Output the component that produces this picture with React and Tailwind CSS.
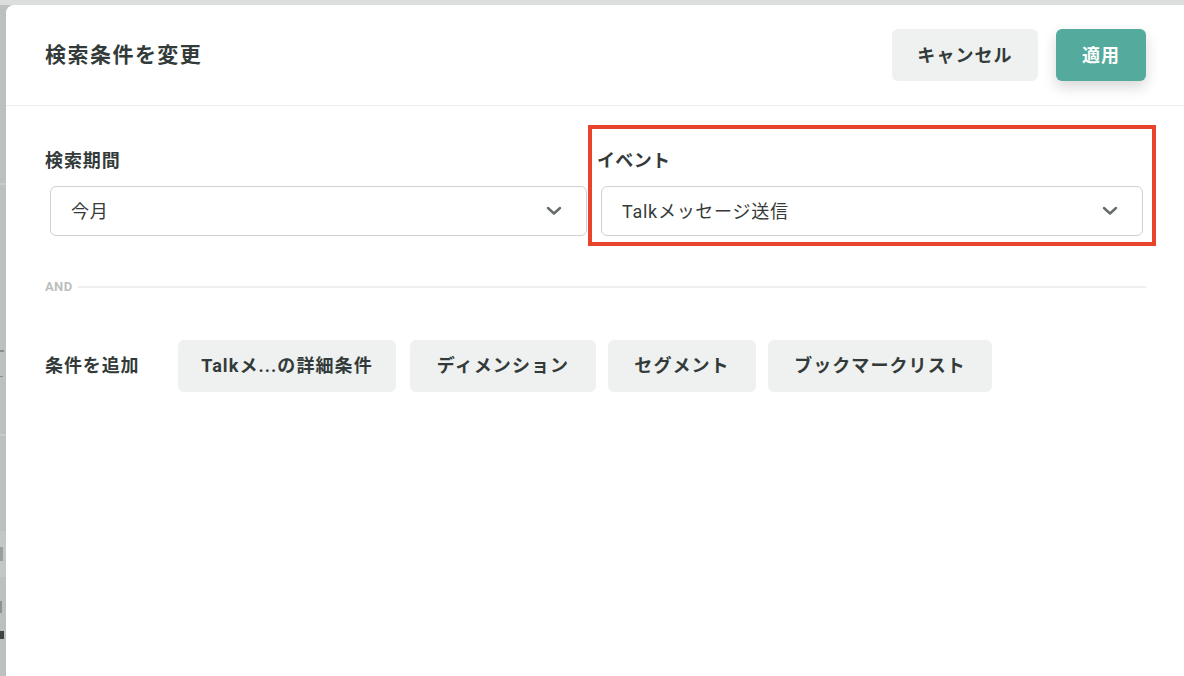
import React from 'react';

const Chevron = () => (
  <svg width="16" height="10" viewBox="0 0 16 10" fill="none">
    <path d="M2 2 L8 7.5 L14 2" stroke="#666a69" strokeWidth="2.4" strokeLinecap="round" strokeLinejoin="round" />
  </svg>
);

function Select({ value, className }) {
  return (
    <div
      className={`h-[50px] flex items-center justify-between pl-[20px] pr-[24px] border border-[#cfd1d0] rounded-[6px] bg-white ${className}`}
    >
      <span className="text-[18px] text-[#363b3a] tracking-[0.04em]">{value}</span>
      <Chevron />
    </div>
  );
}

const conditions = [
  { label: 'Talkメ...の詳細条件', width: 'w-[218px]' },
  { label: 'ディメンション', width: 'w-[186px]' },
  { label: 'セグメント', width: 'w-[148px]' },
  { label: 'ブックマークリスト', width: 'w-[224px]' },
];

export default function App() {
  return (
    <div className="w-[1184px] h-[676px] overflow-hidden flex flex-col bg-[#bcc0c0] font-['Roboto','Noto_Sans_CJK_JP',sans-serif]">
      <div className="h-[5px] bg-[#dcdddd] shrink-0" />
      <div className="flex flex-1">
        {/* backdrop page peeking through */}
        <div className="w-[6px] shrink-0 flex flex-col overflow-hidden">
          <div className="h-[178px] shrink-0" />
          <div className="h-[2px] bg-[#c8cbcb] shrink-0" />
          <div className="h-[165px] shrink-0" />
          <div className="h-[2px] w-[4px] bg-[#8a8f8e] shrink-0" />
          <div className="h-[24px] shrink-0" />
          <div className="h-[1px] w-[3px] bg-[#8a8f8e] shrink-0" />
          <div className="h-[57px] shrink-0" />
          <div className="h-[2px] bg-[#c8cbcb] shrink-0" />
          <div className="h-[95px] shrink-0" />
          <div className="h-[46px] bg-[#c4c7c7] flex items-center shrink-0">
            <div className="h-[14px] w-[3px] bg-[#9a9e9d]" />
          </div>
          <div className="h-[24px] shrink-0" />
          <div className="h-[12px] w-[2px] bg-[#8e9291] shrink-0" />
          <div className="h-[18px] shrink-0" />
          <div className="h-[8px] w-[4px] bg-[#3f4443] shrink-0" />
        </div>

        <div className="flex-1 bg-white rounded-tl-[8px] flex flex-col text-[#333b3a]">
          {/* header */}
          <div className="h-[101px] shrink-0 flex items-center justify-between pl-[39px] pr-[38px] border-b border-[#ebecec]">
            <h1 className="text-[21px] font-bold tracking-[0.07em] mt-[2px]">検索条件を変更</h1>
            <div className="flex items-center gap-[18px]">
              <button className="w-[146px] h-[52px] rounded-[6px] bg-[#eff1f0] text-[18px] font-bold tracking-[0.06em]">
                キャンセル
              </button>
              <button className="w-[90px] h-[52px] rounded-[6px] bg-[#54aa9d] text-white text-[18px] font-bold tracking-[0.06em] shadow-[0_6px_14px_rgba(0,0,0,0.16)]">
                適用
              </button>
            </div>
          </div>

          {/* body */}
          <div className="pl-[39px] pr-[38px] pt-[42px]">
            <div className="relative flex gap-[6px]">
              <div className="w-[546px] flex flex-col">
                <label className="text-[18px] font-bold tracking-[0.05em] h-[26px] leading-[26px]">検索期間</label>
                <Select value="今月" className="mt-[12px] ml-[5px] w-[537px]" />
              </div>
              <div className="flex-1 flex flex-col">
                <label className="text-[18px] font-bold tracking-[0.02em] h-[26px] leading-[26px]">イベント</label>
                <Select value="Talkメッセージ送信" className="mt-[12px] ml-[4px] w-[542px]" />
              </div>
              {/* annotation box */}
              <div className="absolute left-[543px] top-[-23px] w-[568px] h-[121px] border-[4px] border-[#e8432b] pointer-events-none" />
            </div>

            <div className="flex items-center gap-[5px] mt-[41px]">
              <span className="text-[13px] font-bold text-[#bdbfbe] tracking-[0.03em]">AND</span>
              <div className="flex-1 h-[2px] bg-[#eeefef]" />
            </div>

            <div className="flex items-center mt-[43px]">
              <span className="w-[133px] shrink-0 text-[18px] font-bold tracking-[0.05em]">条件を追加</span>
              <div className="flex items-center gap-[12px]">
                {conditions.map((c, i) => (
                  <button
                    key={c.label}
                    className={`${c.width} h-[52px] rounded-[6px] bg-[#eff1f0] text-[18px] font-bold tracking-[0.06em] ${i === 1 ? 'ml-[2px]' : ''}`}
                  >
                    {c.label}
                  </button>
                ))}
              </div>
            </div>
          </div>
        </div>
      </div>
    </div>
  );
}
